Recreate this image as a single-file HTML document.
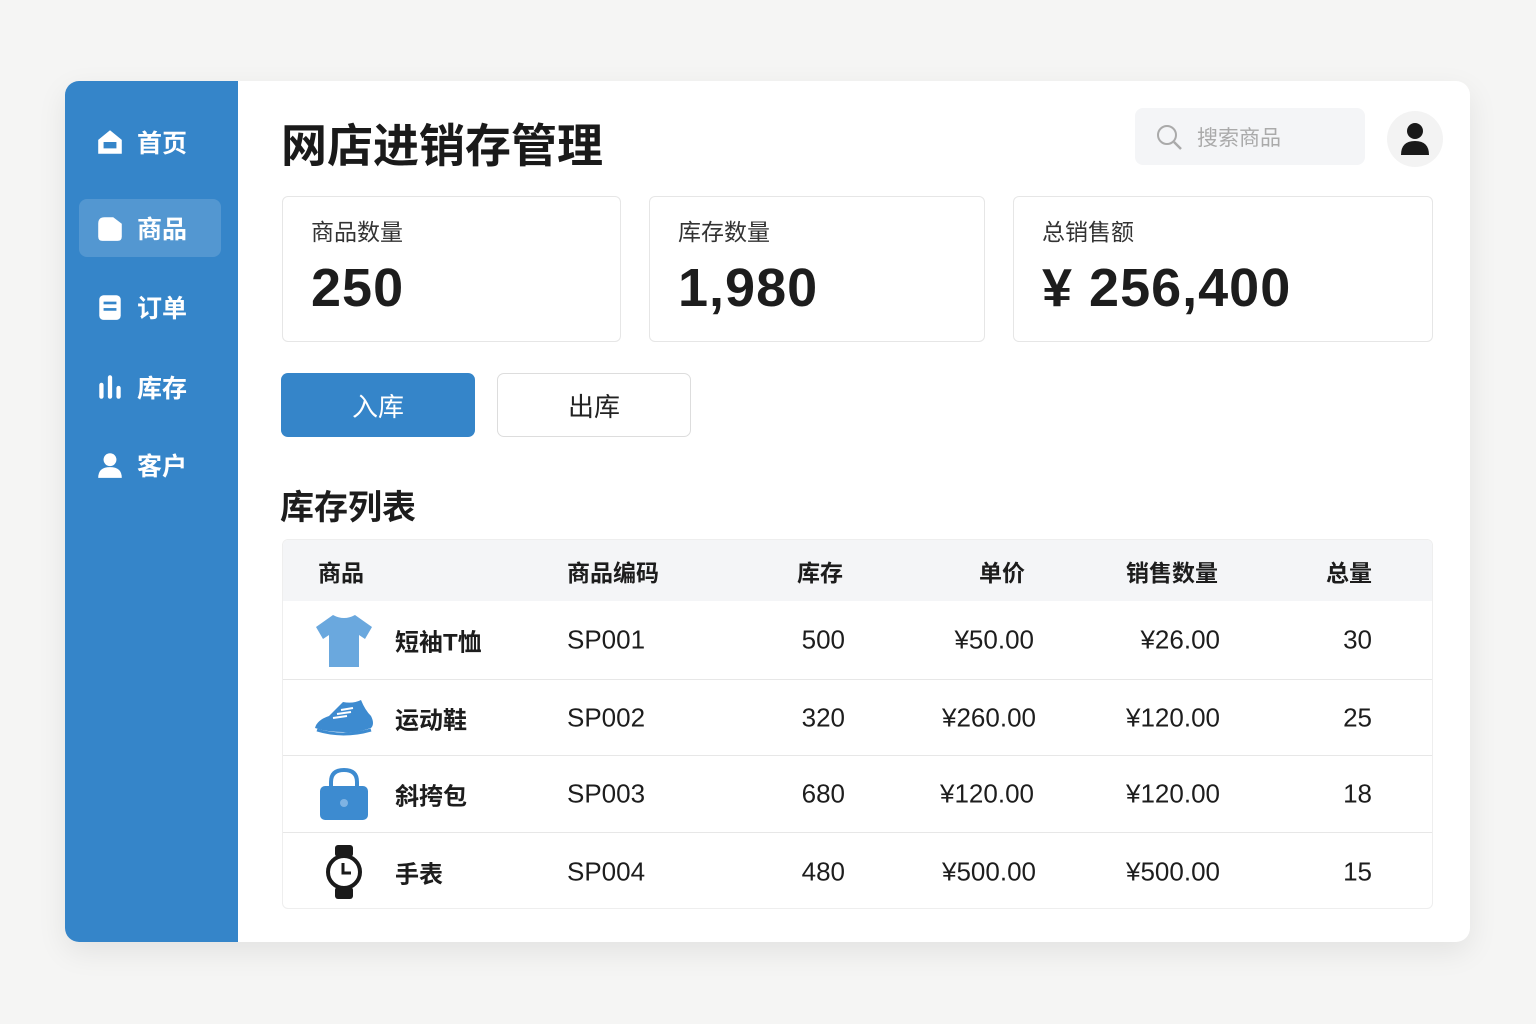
<!DOCTYPE html><html><head><meta charset="utf-8"><style>
*{margin:0;padding:0;box-sizing:border-box}
body{width:1536px;height:1024px;background:#f5f5f4;font-family:"Liberation Sans","Noto Sans CJK SC",sans-serif;position:relative;overflow:hidden;color:#1d1d1d}
.card{position:absolute;left:65px;top:81px;width:1405px;height:861px;background:#fff;border-radius:14px;box-shadow:0 10px 30px rgba(0,0,0,.08);overflow:hidden}
.side{position:absolute;left:0;top:0;width:173px;height:100%;background:#3585c9}
.nav{position:absolute;left:14px;width:142px;height:58px;color:#fff;font-size:25px;font-weight:bold;display:flex;align-items:center;padding-left:16px;gap:12px;border-radius:8px}
.nav svg{width:30px;height:30px}
.abs{position:absolute}
.stat{position:absolute;top:115px;height:146px;border:1px solid #e6e6e6;border-radius:6px;padding:16px 28px}
.stat .l{font-size:23px;color:#333}
.stat .n{font-size:54px;font-weight:bold;margin-top:10px;color:#1d1d1d;letter-spacing:1px}
.btn{position:absolute;top:292px;width:194px;height:64px;border-radius:7px;font-size:26px;display:flex;align-items:center;justify-content:center}
.tbl{position:absolute;left:217px;top:458px;width:1151px;height:370px;border:1px solid #eee;border-radius:6px;overflow:hidden}
.hd{position:absolute;left:0;top:0;width:100%;height:61px;background:#f4f5f7;font-size:23px;font-weight:bold}
.row{position:absolute;left:0;width:100%;border-top:1px solid #e7e7e7;font-size:26px}
.c{position:absolute;top:50%;transform:translateY(-50%);white-space:nowrap}
.r{text-align:right}
</style></head><body>
<div class="card">
 <div class="side">
  <div class="nav" style="top:32px"><svg viewBox="0 0 28 28"><path d="M3 12 L14 3 L25 12 V25 H3Z M8 14 V20 H20 V14Z" fill="#fff" fill-rule="evenodd"/></svg>首页</div>
  <div class="nav" style="top:118px;background:rgba(255,255,255,.15)"><svg viewBox="0 0 28 28"><path d="M3 10 Q3 4 9 4 H17 L25 10 V22 Q25 26 21 26 H7 Q3 26 3 22Z" fill="#fff"/></svg>商品</div>
  <div class="nav" style="top:197px"><svg viewBox="0 0 28 28"><rect x="4" y="3" width="20" height="23" rx="4" fill="#fff"/><rect x="8" y="9" width="12" height="2.5" fill="#3585c9"/><rect x="8" y="15" width="12" height="2.5" fill="#3585c9"/></svg>订单</div>
  <div class="nav" style="top:277px"><svg viewBox="0 0 28 28"><rect x="4" y="10" width="4" height="15" rx="2" fill="#fff"/><rect x="12" y="3" width="4" height="22" rx="2" fill="#fff"/><rect x="20" y="13" width="4" height="12" rx="2" fill="#fff"/></svg>库存</div>
  <div class="nav" style="top:355px"><svg viewBox="0 0 28 28"><circle cx="14" cy="9" r="6" fill="#fff"/><path d="M3 26 Q3 16 14 16 Q25 16 25 26Z" fill="#fff"/></svg>客户</div>
 </div>
 <div class="abs" style="left:216px;top:29px;font-size:46px;font-weight:bold;color:#1a1a1a">网店进销存管理</div>
 <div class="abs" style="left:1070px;top:27px;width:230px;height:57px;background:#f4f5f7;border-radius:8px;color:#aaa;font-size:21px;display:flex;align-items:center;padding-left:20px;gap:14px"><svg width="28" height="28" viewBox="0 0 28 28"><circle cx="12" cy="12" r="9" fill="none" stroke="#aaa" stroke-width="2"/><path d="M19 19 L26 26" stroke="#aaa" stroke-width="2.5"/></svg>搜索商品</div>
 <div class="abs" style="left:1322px;top:30px;width:56px;height:56px;border-radius:50%;background:#f3f3f3"><svg width="56" height="56" viewBox="0 0 56 56"><circle cx="28" cy="20" r="8" fill="#1a1a1a"/><path d="M14 44 Q14 30 28 30 Q42 30 42 44Z" fill="#1a1a1a"/></svg></div>
 <div class="stat" style="left:217px;width:339px"><div class="l">商品数量</div><div class="n">250</div></div>
 <div class="stat" style="left:584px;width:336px"><div class="l">库存数量</div><div class="n">1,980</div></div>
 <div class="stat" style="left:948px;width:420px"><div class="l">总销售额</div><div class="n">¥ 256,400</div></div>
 <div class="btn" style="left:216px;background:#3585c9;color:#fff">入库</div>
 <div class="btn" style="left:432px;border:1px solid #ddd;color:#222">出库</div>
 <div class="abs" style="left:215px;top:399px;font-size:34px;font-weight:bold">库存列表</div>
 <div class="tbl">
  <div class="hd"><span class="c" style="left:35px">商品</span><span class="c" style="left:284px">商品编码</span><span class="c" style="left:514px">库存</span><span class="c" style="left:696px">单价</span><span class="c" style="left:843px">销售数量</span><span class="c" style="left:1043px">总量</span></div>
  <div class="row" style="top:61px;height:78px;border-top:none">
   <svg class="c" style="left:32px" width="58" height="54" viewBox="0 0 58 54"><path d="M18 2 Q29 8 40 2 L57 14 L50 26 L44 22 V54 H14 V22 L8 26 L1 14Z" fill="#6aa8de"/></svg>
   <span class="c" style="left:112px;font-weight:bold;font-size:24px">短袖T恤</span><span class="c" style="left:284px">SP001</span><span class="c r" style="right:587px">500</span><span class="c r" style="right:398px">¥50.00</span><span class="c r" style="right:212px">¥26.00</span><span class="c r" style="right:60px">30</span></div>
  <div class="row" style="top:139px;height:76px">
   <svg class="c" style="left:30px" width="62" height="40" viewBox="0 0 62 40"><path d="M2 30 Q4 22 16 18 L30 4 Q40 6 48 2 Q52 12 58 18 Q62 26 58 30 Q40 36 30 34 Q14 34 2 30Z" fill="#3d8bd0"/><path d="M4 32 Q30 40 58 32" stroke="#3d8bd0" stroke-width="3" fill="none"/><path d="M28 12 L40 10 M24 16 L38 14 M20 20 L34 18" stroke="#fff" stroke-width="2"/></svg>
   <span class="c" style="left:112px;font-weight:bold;font-size:24px">运动鞋</span><span class="c" style="left:284px">SP002</span><span class="c r" style="right:587px">320</span><span class="c r" style="right:396px">¥260.00</span><span class="c r" style="right:212px">¥120.00</span><span class="c r" style="right:60px">25</span></div>
  <div class="row" style="top:215px;height:77px">
   <svg class="c" style="left:36px" width="50" height="52" viewBox="0 0 50 52"><path d="M12 20 V14 Q12 2 25 2 Q38 2 38 14 V20" stroke="#3d8bd0" stroke-width="4" fill="none"/><rect x="1" y="18" width="48" height="34" rx="5" fill="#3d8bd0"/><circle cx="25" cy="35" r="4" fill="#7fb3e3"/></svg>
   <span class="c" style="left:112px;font-weight:bold;font-size:24px">斜挎包</span><span class="c" style="left:284px">SP003</span><span class="c r" style="right:587px">680</span><span class="c r" style="right:398px">¥120.00</span><span class="c r" style="right:212px">¥120.00</span><span class="c r" style="right:60px">18</span></div>
  <div class="row" style="top:292px;height:78px">
   <svg class="c" style="left:42px" width="38" height="54" viewBox="0 0 38 54"><rect x="10" y="0" width="18" height="12" rx="3" fill="#1a1a1a"/><rect x="10" y="42" width="18" height="12" rx="3" fill="#1a1a1a"/><circle cx="19" cy="27" r="16" fill="#fff" stroke="#1a1a1a" stroke-width="4"/><path d="M18 18 V28 H26" stroke="#1a1a1a" stroke-width="3" fill="none"/></svg>
   <span class="c" style="left:112px;font-weight:bold;font-size:24px">手表</span><span class="c" style="left:284px">SP004</span><span class="c r" style="right:587px">480</span><span class="c r" style="right:396px">¥500.00</span><span class="c r" style="right:212px">¥500.00</span><span class="c r" style="right:60px">15</span></div>
 </div>
</div>
</body></html>
